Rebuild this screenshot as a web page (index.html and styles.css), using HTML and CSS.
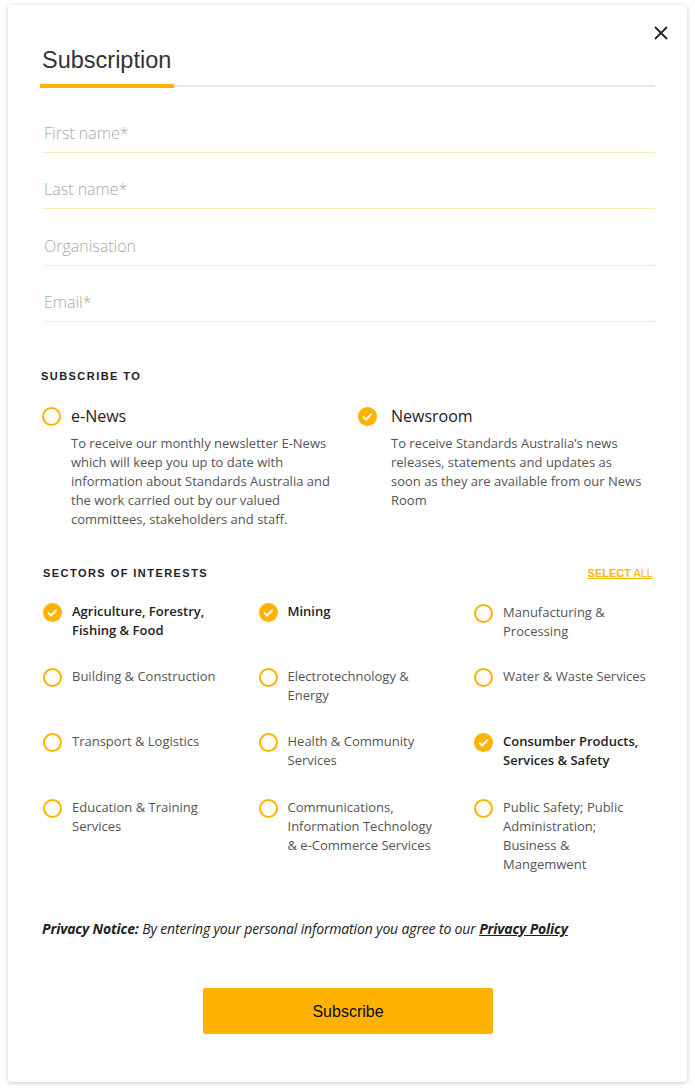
FILE: index.html
```html
<!DOCTYPE html>
<html lang="en">

<head>
    <meta charset="UTF-8">
    <meta name="viewport" content="width=device-width, initial-scale=1.0">
    <title>Subscription - Standards Australia</title>
    <link rel="stylesheet" href="styles.css">
</head>

<body>
    <div class="modal">
        <button class="close" type="button" aria-label="Close">
            <svg width="14" height="14" viewBox="0 0 14 14">
                <path d="M1 1L13 13M13 1L1 13" stroke="#222" stroke-width="1.8" fill="none" />
            </svg>
        </button>

        <div class="tabs">
            <div class="tab active">Subscription</div>
        </div>

        <form class="form">
            <div class="field"><input type="text" placeholder="First name*"></div>
            <div class="field"><input type="text" placeholder="Last name*"></div>
            <div class="field"><input type="text" placeholder="Organisation"></div>
            <div class="field"><input type="email" placeholder="Email*"></div>

            <h3 class="section-title">Subscribe to</h3>
            <div class="options">
                <div class="option">
                    <span class="radio"></span>
                    <div>
                        <div class="option-name">e-News</div>
                        <p class="option-desc">To receive our monthly newsletter E-News which will keep you up to date with information about Standards Australia and the work carried out by our valued committees, stakeholders and staff.</p>
                    </div>
                </div>
                <div class="option">
                    <span class="radio checked"></span>
                    <div>
                        <div class="option-name">Newsroom</div>
                        <p class="option-desc">To receive Standards Australia’s news releases, statements and updates as<br>soon as they are available from our News Room</p>
                    </div>
                </div>
            </div>

            <div class="sectors-head">
                <h3 class="section-title">Sectors of interests</h3>
                <a href="#" class="select-all"><b>Select</b> all</a>
            </div>

            <div class="sectors">
                <div class="sector on"><span class="radio checked"></span><span>Agriculture, Forestry, Fishing &amp; Food</span></div>
                <div class="sector on"><span class="radio checked"></span><span>Mining</span></div>
                <div class="sector low"><span class="radio"></span><span>Manufacturing &amp; Processing</span></div>
                <div class="sector"><span class="radio"></span><span>Building &amp; Construction</span></div>
                <div class="sector"><span class="radio"></span><span>Electrotechnology &amp; Energy</span></div>
                <div class="sector"><span class="radio"></span><span>Water &amp; Waste Services</span></div>
                <div class="sector"><span class="radio"></span><span>Transport &amp; Logistics</span></div>
                <div class="sector"><span class="radio"></span><span>Health &amp; Community Services</span></div>
                <div class="sector on"><span class="radio checked"></span><span>Consumber Products, Services &amp; Safety</span></div>
                <div class="sector"><span class="radio"></span><span>Education &amp; Training Services</span></div>
                <div class="sector"><span class="radio"></span><span>Communications, Information Technology &amp; e-Commerce Services</span></div>
                <div class="sector"><span class="radio"></span><span>Public Safety; Public Administration; Business &amp; Mangemwent</span></div>
            </div>

            <p class="privacy"><b>Privacy Notice:</b> By entering your personal information you agree to our <a href="#">Privacy Policy</a></p>

            <div class="actions">
                <button type="submit" class="btn">Subscribe</button>
            </div>
        </form>
    </div>
</body>

</html>
```

FILE: styles.css
```css
body {
    margin: 0;
    padding: 5px 8px 10px;
    background-color: #fff;
    font-family: "Open Sans", Arial, sans-serif;
    color: #333;
}

.modal {
    position: relative;
    box-sizing: border-box;
    height: 1077px;
    padding: 42px 32px 0 33px;
    background-color: #fff;
    border-radius: 4px;
    box-shadow: 0 1px 5px rgba(0, 0, 0, 0.22);
}

.close {
    position: absolute;
    top: 21px;
    right: 19px;
    padding: 0;
    border: none;
    background: none;
    cursor: pointer;
}

.tabs {
    border-bottom: 2px solid #e8e8e8;
    margin-left: -1px;
}

.tab {
    display: inline-block;
    width: 130px;
    padding: 0 2px 10px 2px;
    margin-bottom: -3px;
    font-family: "Liberation Sans", Arial, sans-serif;
    font-size: 23.5px;
    font-weight: normal;
    color: #333;
    border-bottom: 4px solid #ffb300;
}

.form {
    margin-top: 24px;
}

.field {
    border-bottom: 1px solid #fce9b8;
    margin: 0 0 14.3px 2px;
}

.field input {
    box-sizing: border-box;
    width: 100%;
    height: 41px;
    padding: 3px 1px 0;
    border: none;
    outline: none;
    font-family: "Open Sans", Arial, sans-serif;
    font-size: 16px;
    font-weight: 300;
    color: #333;
}

.field input::placeholder {
    color: #aaa;
}

.section-title {
    margin: 0;
    font-family: "Liberation Sans", Arial, sans-serif;
    font-size: 11px;
    font-weight: bold;
    letter-spacing: 1.45px;
    text-transform: uppercase;
    color: #222;
}

.form > .section-title {
    margin-top: 48px;
}

.options {
    display: grid;
    grid-template-columns: 316px 1fr;
    margin-top: 24px;
    margin-left: 1px;
}

.option {
    display: flex;
    gap: 10px;
}

.option + .option {
    gap: 14px;
}

.option-name {
    font-size: 16px;
    line-height: 20px;
    color: #222;
}

.option-desc {
    margin: 8px 0 0;
    padding-right: 6px;
    font-size: 13px;
    line-height: 19px;
    color: #555;
}

.radio {
    flex: none;
    box-sizing: border-box;
    width: 19px;
    height: 19px;
    margin-top: 1px;
    border: 2px solid #ffb300;
    border-radius: 50%;
}

.radio.checked {
    background: #ffb300 url("data:image/svg+xml,%3Csvg xmlns='http://www.w3.org/2000/svg' viewBox='0 0 19 19'%3E%3Cpath d='M5.2 9.6l2.9 2.9 5.6-5.8' stroke='white' stroke-width='2' fill='none'/%3E%3C/svg%3E") no-repeat center / 19px 19px;
    border: none;
}

.sectors-head {
    display: flex;
    justify-content: space-between;
    align-items: center;
    margin: 38px 2px 0 2px;
}

.select-all {
    font-family: "Liberation Sans", Arial, sans-serif;
    font-size: 11px;
    text-transform: uppercase;
    color: #ffb300;
}

.sectors {
    display: grid;
    grid-template-columns: repeat(3, 181px);
    column-gap: 34.5px;
    row-gap: 27.3px;
    margin: 23px 0 0 2px;
}

.sector {
    display: flex;
    gap: 10px;
    font-size: 13px;
    line-height: 19px;
    color: #555;
}

.sector > span:last-child {
    max-width: 148px;
}

.sector.on {
    font-weight: 650;
    color: #222;
}

.sector.on > span:last-child {
    max-width: 156px;
}

.sector.low {
    padding-top: 1px;
    margin-bottom: -1px;
}

.privacy {
    margin: 45px 0 0 1px;
    font-size: 14px;
    font-style: italic;
    letter-spacing: -0.15px;
    color: #222;
}

.privacy a {
    color: #222;
    font-weight: bold;
}

.actions {
    display: flex;
    justify-content: center;
    margin-top: 50px;
}

.btn {
    width: 290px;
    height: 46px;
    border: none;
    border-radius: 2px;
    background-color: #ffb300;
    font-family: "Liberation Sans", Arial, sans-serif;
    font-size: 16px;
    padding-top: 3px;
    color: #0a0a0a;
    cursor: pointer;
}
```
